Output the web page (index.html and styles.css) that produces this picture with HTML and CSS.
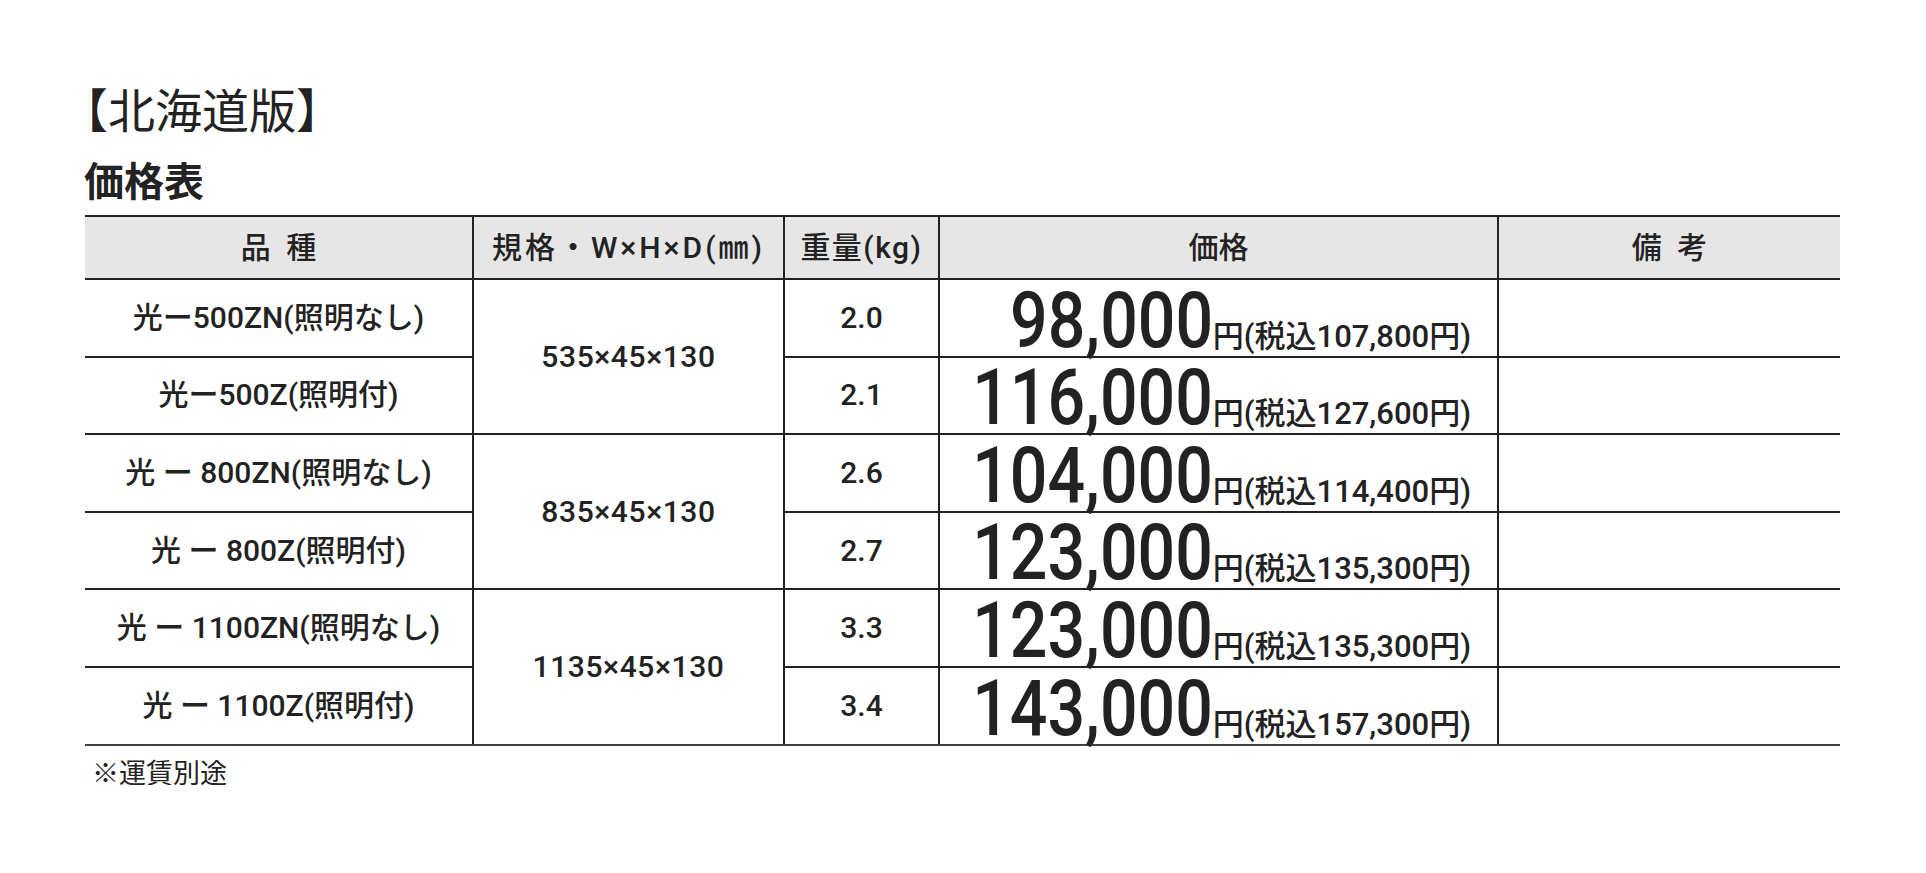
FILE: index.html
```html
<!DOCTYPE html>
<html lang="ja">
<head>
<meta charset="utf-8">
<title>北海道版 価格表</title>
<link rel="stylesheet" href="styles.css">
</head>
<body>
<main class="sheet">
  <h1 class="title">【北海道版】</h1>
  <h2 class="subtitle">価格表</h2>
  <table class="price-table">
    <colgroup>
      <col class="c-name">
      <col class="c-size">
      <col class="c-weight">
      <col class="c-price">
      <col class="c-note">
    </colgroup>
    <thead>
      <tr>
        <th>品&ensp;種</th>
        <th class="wide">規格・W×H×D(㎜)</th>
        <th class="semi">重量(kg)</th>
        <th>価格</th>
        <th>備&ensp;考</th>
      </tr>
    </thead>
    <tbody>
      <tr>
        <td class="name">光ー500ZN(照明なし)</td>
        <td class="size" rowspan="2">535×45×130</td>
        <td class="weight">2.0</td>
        <td class="price"><div class="price-line"><span class="amount">98,000</span><span class="tax">円(税込107,800円)</span></div></td>
        <td class="remark"></td>
      </tr>
      <tr>
        <td class="name">光ー500Z(照明付)</td>
        <td class="weight">2.1</td>
        <td class="price"><div class="price-line"><span class="amount">116,000</span><span class="tax">円(税込127,600円)</span></div></td>
        <td class="remark"></td>
      </tr>
      <tr>
        <td class="name">光 ー 800ZN(照明なし)</td>
        <td class="size" rowspan="2">835×45×130</td>
        <td class="weight">2.6</td>
        <td class="price"><div class="price-line"><span class="amount">104,000</span><span class="tax">円(税込114,400円)</span></div></td>
        <td class="remark"></td>
      </tr>
      <tr>
        <td class="name">光 ー 800Z(照明付)</td>
        <td class="weight">2.7</td>
        <td class="price"><div class="price-line"><span class="amount">123,000</span><span class="tax">円(税込135,300円)</span></div></td>
        <td class="remark"></td>
      </tr>
      <tr>
        <td class="name">光 ー 1100ZN(照明なし)</td>
        <td class="size last" rowspan="2">1135×45×130</td>
        <td class="weight">3.3</td>
        <td class="price"><div class="price-line"><span class="amount">123,000</span><span class="tax">円(税込135,300円)</span></div></td>
        <td class="remark"></td>
      </tr>
      <tr class="last">
        <td class="name">光 ー 1100Z(照明付)</td>
        <td class="weight">3.4</td>
        <td class="price"><div class="price-line"><span class="amount">143,000</span><span class="tax">円(税込157,300円)</span></div></td>
        <td class="remark"></td>
      </tr>
    </tbody>
  </table>
  <p class="note">※運賃別途</p>
</main>
</body>
</html>
```

FILE: styles.css
```css
html, body {
  margin: 0;
  padding: 0;
  background: #ffffff;
}

body {
  color: #222222;
  font-family: Roboto, "Noto Sans CJK JP", sans-serif;
}

.sheet {
  padding: 84px 0 0 85px;
}

.title {
  margin: 0 0 28px -24px;
  font-family: "Noto Sans CJK JP", sans-serif;
  font-size: 47px;
  font-weight: 400;
  line-height: 1;
}

.subtitle {
  margin: 0 0 16px -1px;
  font-family: "Noto Sans CJK JP", sans-serif;
  font-size: 40px;
  font-weight: 700;
  line-height: 1;
}

.price-table {
  width: 1755px;
  border-collapse: collapse;
  table-layout: fixed;
}

.c-name { width: 388px; }
.c-size { width: 311px; }
.c-weight { width: 155px; }
.c-price { width: 559px; }
.c-note { width: 342px; }

.price-table th,
.price-table td {
  padding: 0;
  border-top: 2px solid #222222;
  border-bottom: 2px solid #222222;
  border-left: 2px solid #222222;
  text-align: center;
  vertical-align: middle;
  white-space: nowrap;
}

.price-table th:first-child,
.price-table td.name {
  border-left: none;
}

.price-table th {
  height: 61px;
  background: #e6e6e6;
  font-size: 30px;
  font-weight: 500;
  line-height: 1;
}

.price-table th.wide {
  letter-spacing: 0.1em;
}

.price-table th.semi {
  letter-spacing: 0.05em;
}

.price-table td {
  height: 75.6px;
  font-size: 30px;
  font-weight: 500;
  line-height: 1;
}

.price-table td.size {
  letter-spacing: 0.02em;
}

.price-table tr.last td,
.price-table td.size.last {
  border-bottom-color: #444444;
}

.price-table td.price {
  vertical-align: bottom;
  padding-right: 26px;
}

.price-line {
  display: flex;
  justify-content: flex-end;
  align-items: baseline;
}

.amount {
  display: inline-block;
  font-size: 77px;
  font-weight: 500;
  line-height: 70px;
  transform: scaleX(0.86);
  transform-origin: right bottom;
}

.tax {
  font-size: 31px;
  font-weight: 500;
  line-height: 1;
}

.note {
  margin: 12px 0 0 7px;
  font-family: "Noto Sans CJK JP", sans-serif;
  font-size: 27px;
  font-weight: 400;
  line-height: 1;
}
```
